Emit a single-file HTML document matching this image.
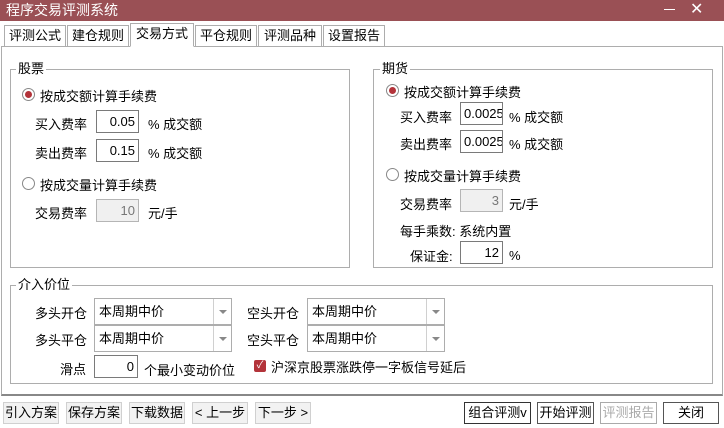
<!DOCTYPE html>
<html><head><meta charset="utf-8"><style>
*{margin:0;padding:0;box-sizing:border-box}
body{width:724px;height:428px;background:#fff;font-family:"Liberation Sans","Noto Sans CJK SC",sans-serif;font-size:13px;color:#000;position:relative;overflow:hidden}
.a{position:absolute;white-space:nowrap}
.title{left:0;top:0;width:724px;height:21px;background:#9a5055;color:#fff;font-size:14px;line-height:20px;padding-left:6px}
.tab{top:25px;height:22px;border:1px solid #adadad;border-bottom:none;line-height:20px;text-align:center;background:#fff}
.box{border:1px solid #adadad}
.leg{background:#fff;padding:0 2px;line-height:14px}
.inp{border:1px solid #7a7a7a;background:#fff;height:23px;line-height:21px;text-align:right;padding-right:3px;overflow:hidden}
.dis{background:#f0f0f0;border-color:#b5b5b5;color:#777}
.radio{width:13px;height:13px;border:1px solid #888;border-radius:50%;background:#fff}
.radio.on::after{content:"";position:absolute;left:2px;top:2px;width:7px;height:7px;border-radius:50%;background:#b3333a}
.combo{height:27px;border:1px solid #adadad;background:#fff;line-height:25px;padding-left:4px}
.combo .arr{position:absolute;right:0;top:0;width:18px;height:25px;border-left:1px solid #d0d0d0}
.combo .arr::after{content:"";position:absolute;left:5px;top:11px;border:4px solid transparent;border-top:4px solid #888}
.btn{top:402px;height:22px;border:1px solid #d0d0d0;background:#f2f2f2;line-height:20px;text-align:center}
</style></head><body>
<div class="a title">程序交易评测系统</div>
<div class="a" style="left:664px;top:9px;width:11px;height:1px;background:#fff"></div>
<div class="a" style="left:690px;top:1px;color:#fff;font-size:16px;line-height:18px">✕</div>

<div class="a tab" style="left:4px;width:62px">评测公式</div>
<div class="a tab" style="left:67px;width:62px">建仓规则</div>
<div class="a tab" style="left:130px;top:23px;height:24px;width:64px;z-index:2;border-bottom:1px solid #fff">交易方式</div>
<div class="a tab" style="left:195px;width:62px">平仓规则</div>
<div class="a tab" style="left:258px;width:64px">评测品种</div>
<div class="a tab" style="left:323px;width:62px">设置报告</div>
<div class="a" style="left:1px;top:46px;width:722px;height:350px;border:1px solid #adadad;border-bottom:2px solid #888"></div>

<div class="a box" style="left:10px;top:69px;width:340px;height:199px"></div>
<div class="a leg" style="left:16px;top:62px">股票</div>
<div class="a radio on" style="left:22px;top:88px"></div>
<div class="a" style="left:40px;top:86px">按成交额计算手续费</div>
<div class="a" style="left:35px;top:114px">买入费率</div>
<div class="a inp" style="left:96px;top:110px;width:43px">0.05</div>
<div class="a" style="left:148px;top:114px">% 成交额</div>
<div class="a" style="left:35px;top:143px">卖出费率</div>
<div class="a inp" style="left:96px;top:139px;width:43px">0.15</div>
<div class="a" style="left:148px;top:143px">% 成交额</div>
<div class="a radio" style="left:22px;top:177px"></div>
<div class="a" style="left:40px;top:175px">按成交量计算手续费</div>
<div class="a" style="left:35px;top:203px">交易费率</div>
<div class="a inp dis" style="left:96px;top:199px;width:43px">10</div>
<div class="a" style="left:148px;top:203px">元/手</div>

<div class="a box" style="left:373px;top:69px;width:340px;height:199px"></div>
<div class="a leg" style="left:380px;top:62px">期货</div>
<div class="a radio on" style="left:386px;top:84px"></div>
<div class="a" style="left:404px;top:82px">按成交额计算手续费</div>
<div class="a" style="left:400px;top:107px">买入费率</div>
<div class="a inp" style="left:460px;top:102px;width:43px;text-align:left;padding-left:3px">0.0025</div>
<div class="a" style="left:509px;top:107px">% 成交额</div>
<div class="a" style="left:400px;top:134px">卖出费率</div>
<div class="a inp" style="left:460px;top:130px;width:43px;text-align:left;padding-left:3px">0.0025</div>
<div class="a" style="left:509px;top:134px">% 成交额</div>
<div class="a radio" style="left:386px;top:168px"></div>
<div class="a" style="left:404px;top:166px">按成交量计算手续费</div>
<div class="a" style="left:400px;top:194px">交易费率</div>
<div class="a inp dis" style="left:460px;top:189px;width:43px">3</div>
<div class="a" style="left:509px;top:194px">元/手</div>
<div class="a" style="left:400px;top:221px">每手乘数: 系统内置</div>
<div class="a" style="left:410px;top:246px">保证金:</div>
<div class="a inp" style="left:460px;top:241px;width:43px">12</div>
<div class="a" style="left:509px;top:248px">%</div>

<div class="a box" style="left:10px;top:285px;width:703px;height:99px"></div>
<div class="a leg" style="left:16px;top:278px">介入价位</div>
<div class="a" style="left:35px;top:303px">多头开仓</div>
<div class="a combo" style="left:94px;top:298px;width:138px">本周期中价<span class="arr"></span></div>
<div class="a" style="left:247px;top:303px">空头开仓</div>
<div class="a combo" style="left:307px;top:298px;width:138px">本周期中价<span class="arr"></span></div>
<div class="a" style="left:35px;top:330px">多头平仓</div>
<div class="a combo" style="left:94px;top:325px;width:138px">本周期中价<span class="arr"></span></div>
<div class="a" style="left:247px;top:330px">空头平仓</div>
<div class="a combo" style="left:307px;top:325px;width:138px">本周期中价<span class="arr"></span></div>
<div class="a" style="left:60px;top:359px">滑点</div>
<div class="a inp" style="left:94px;top:355px;width:44px">0</div>
<div class="a" style="left:144px;top:360px">个最小变动价位</div>
<div class="a" style="left:254px;top:360px;width:12px;height:12px;background:#b3333a;border-radius:2px;color:#fff;font-size:10px;line-height:12px;text-align:center">✓</div>
<div class="a" style="left:271px;top:357px">沪深京股票涨跌停一字板信号延后</div>

<div class="a btn" style="left:3px;width:56px">引入方案</div>
<div class="a btn" style="left:66px;width:56px">保存方案</div>
<div class="a btn" style="left:129px;width:56px">下载数据</div>
<div class="a btn" style="left:192px;width:56px">&lt; 上一步</div>
<div class="a btn" style="left:255px;width:56px">下一步 &gt;</div>
<div class="a btn" style="left:464px;width:67px;border:1px solid #333;background:#fff">组合评测v</div>
<div class="a btn" style="left:537px;width:57px;border-color:#555;background:#fff">开始评测</div>
<div class="a btn" style="left:600px;width:57px;border-color:#aaa;background:#fff;color:#aaa">评测报告</div>
<div class="a btn" style="left:663px;width:56px;border-color:#555;background:#fff">关闭</div>
</body></html>
